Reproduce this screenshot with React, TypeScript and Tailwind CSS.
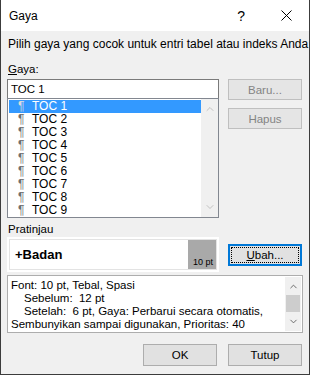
import { ChevronUp, ChevronDown } from "lucide-react";

const rows = ["TOC 1", "TOC 2", "TOC 3", "TOC 4", "TOC 5", "TOC 6", "TOC 7", "TOC 8", "TOC 9"];

function Btn({ children, disabled, focused }: { children: React.ReactNode; disabled?: boolean; focused?: boolean }) {
  if (focused) {
    return (
      <div className="flex h-[22px] w-[74px] items-center justify-center border-2 border-[#0078d7] bg-[#e1e1e1] p-px">
        <div className="flex h-full w-full items-center justify-center border border-dotted border-black">{children}</div>
      </div>
    );
  }
  return (
    <div
      className={
        disabled
          ? "flex h-[21px] w-[74px] items-center justify-center border border-[#bfbfbf] bg-[#e5e5e5] text-[#838383]"
          : "flex h-[22px] w-[74px] items-center justify-center border border-[#adadad] bg-[#e1e1e1] text-black"
      }
    >
      {children}
    </div>
  );
}

export default function App() {
  return (
    <div
      className="flex h-[375px] w-[310px] flex-col overflow-hidden whitespace-nowrap border-x border-b border-[#3c3c3c] bg-[#f0f0f0] text-[11.5px] leading-[14px] text-black"
      style={{ fontFamily: '"Liberation Sans", Arial, sans-serif' }}
    >
      {/* Title bar */}
      <div className="flex h-[31px] shrink-0 items-center bg-white">
        <span className="pl-[8px] text-[12px]">Gaya</span>
        <span className="ml-auto mr-[36px] text-[14px]">?</span>
        <svg width="11" height="11" viewBox="0 0 11 11" className="mr-[17px]">
          <path d="M0.5 0.5 L10.5 10.5 M10.5 0.5 L0.5 10.5" stroke="#000" strokeWidth="1" />
        </svg>
      </div>

      <div className="flex flex-1 flex-col px-[6px] pt-[6px]">
        <div className="pl-[1px] text-[12px]">Pilih gaya yang cocok untuk entri tabel atau indeks Anda</div>

        <div className="mt-[11px] pl-[1px]">
          <span className="underline">G</span>aya:
        </div>

        <div className="mt-[3px] flex gap-[9px]">
          <div className="flex w-[212px] flex-col">
            <div className="flex h-[19px] items-center border border-[#7a7a7a] border-b-0 bg-white pl-[3px]">TOC 1</div>
            <div className="flex h-[120px] border border-[#828790] bg-white">
              <div className="flex flex-1 flex-col pl-px pt-px">
                {rows.map((r, i) => (
                  <div
                    key={r}
                    className={
                      i === 0
                        ? "flex h-[13px] items-center bg-[#3399ff] text-[12px] leading-[13px] text-white"
                        : "flex h-[13px] items-center text-[12px] leading-[13px] text-black"
                    }
                  >
                    <span className={i === 0 ? "w-[23px] pl-[9px] text-[#dcdcdc]" : "w-[23px] pl-[9px] text-[#707070]"}>¶</span>
                    <span>{r}</span>
                  </div>
                ))}
              </div>
              <div className="flex w-[17px] flex-col items-center justify-between bg-[#f0f0f0] py-[4px]">
                <ChevronUp size={12} strokeWidth={2} color="#c2c2c2" />
                <ChevronDown size={12} strokeWidth={2} color="#c2c2c2" />
              </div>
            </div>
          </div>
          <div className="flex flex-col gap-[8px]">
            <Btn disabled>Baru...</Btn>
            <Btn disabled>Hapus</Btn>
          </div>
        </div>

        <div className="mt-[4px] pl-[1px]">Pratinjau</div>

        <div className="mt-[1px] flex items-center gap-[9px]">
          <div className="h-[35px] w-[212px] shrink-0 bg-white p-[2px]">
            <div className="flex h-full border border-[#e3e3e3]">
              <div className="flex flex-1 items-center pl-[5px] text-[13px] font-bold">+Badan</div>
              <div className="flex w-[28px] items-end justify-end bg-[#a9a9a9] pb-[1px] pr-[3px] text-[9px] leading-[11px]">10 pt</div>
            </div>
          </div>
          <Btn focused>
            <span>
              <span className="underline">U</span>bah...
            </span>
          </Btn>
        </div>

        <div className="mt-[3px] flex h-[58px] shrink-0 border border-[#adadad] bg-white p-px">
          <div className="flex flex-1 flex-col pl-[2px] pt-[2px] leading-[13px]">
            <div>Font: 10 pt, Tebal, Spasi</div>
            <div className="pl-[13px]">Sebelum:&nbsp; 12 pt</div>
            <div className="pl-[13px]">Setelah:&nbsp; 6 pt, Gaya: Perbarui secara otomatis,</div>
            <div>Sembunyikan sampai digunakan, Prioritas: 40</div>
          </div>
          <div className="flex w-[16px] flex-col items-center bg-[#f0f0f0]">
            <ChevronUp size={11} strokeWidth={2} color="#606060" className="mt-[4px]" />
            <div className="mt-[3px] h-[17px] w-[14px] bg-[#cdcdcd]" />
            <ChevronDown size={11} strokeWidth={2} color="#606060" className="mb-[4px] mt-auto" />
          </div>
        </div>

        <div className="mt-[11px] flex justify-end gap-[11px] pr-px">
          <Btn>OK</Btn>
          <Btn>Tutup</Btn>
        </div>
      </div>
    </div>
  );
}
